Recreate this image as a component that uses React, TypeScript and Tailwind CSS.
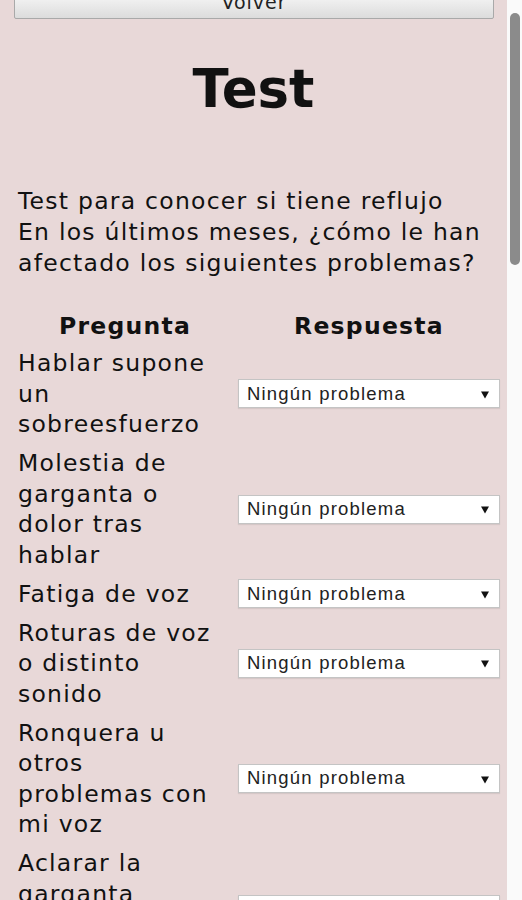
import React from 'react'

const preguntas = [
  'Hablar supone un sobreesfuerzo',
  'Molestia de garganta o dolor tras hablar',
  'Fatiga de voz',
  'Roturas de voz o distinto sonido',
  'Ronquera u otros problemas con mi voz',
  'Aclarar la garganta frecuentemente o carraspear',
]

function Respuesta() {
  return (
    <div className="flex h-[29px] items-center justify-between border border-[#c4c4c4] bg-white pl-[8px] pr-[10px] font-['Liberation_Sans',Arial,sans-serif] text-[18.5px] tracking-[1.2px] text-[#222] shadow-[0_1px_1px_rgba(0,0,0,0.08)]">
      <span>Ningún problema</span>
      <svg width="8" height="8" viewBox="0 0 8 8" className="mt-[2px]">
        <path d="M0 0.5 H8 L4 7.5 Z" fill="#111" />
      </svg>
    </div>
  )
}

export default function App() {
  return (
    <div className="flex h-[900px] overflow-hidden bg-[#fafafa]">
      <div className="w-[507px] shrink-0 bg-[#e8d8d8] font-['DejaVu_Sans',Verdana,sans-serif] text-[#111]">
        <button className="-mt-[15px] ml-[14px] block h-[34px] w-[480px] rounded-b-[2px] border border-[#a9a9a9] bg-linear-to-b from-white to-[#dcdcdc] text-[19px] tracking-[1px] text-[#222]">
          Volver
        </button>

        <h1 className="mt-[40px] text-center text-[53px] font-bold leading-[60px]">Test</h1>

        <p className="mt-[67px] px-[18px] text-[23.5px] leading-[31px] tracking-[1.25px]">
          Test para conocer si tiene reflujo
          <br />
          En los últimos meses, ¿cómo le han afectado los siguientes problemas?
        </p>

        <div className="mt-[32px] grid grid-cols-[214px_262px] gap-x-[6px] gap-y-[8.5px] pl-[18px] text-[23.5px] leading-[30.5px] tracking-[1.25px]">
          <div className="mb-[-2px] text-center font-bold">Pregunta</div>
          <div className="mb-[-2px] text-center font-bold">Respuesta</div>
          {preguntas.map((p) => (
            <React.Fragment key={p}>
              <div className="pr-[6px]">{p}</div>
              <div className="self-center">
                <Respuesta />
              </div>
            </React.Fragment>
          ))}
        </div>
      </div>

      <div className="flex-1 pl-[3px] pt-[13px]">
        <div className="h-[252px] w-[10px] rounded-full bg-[#8b8b8b]" />
      </div>
    </div>
  )
}
